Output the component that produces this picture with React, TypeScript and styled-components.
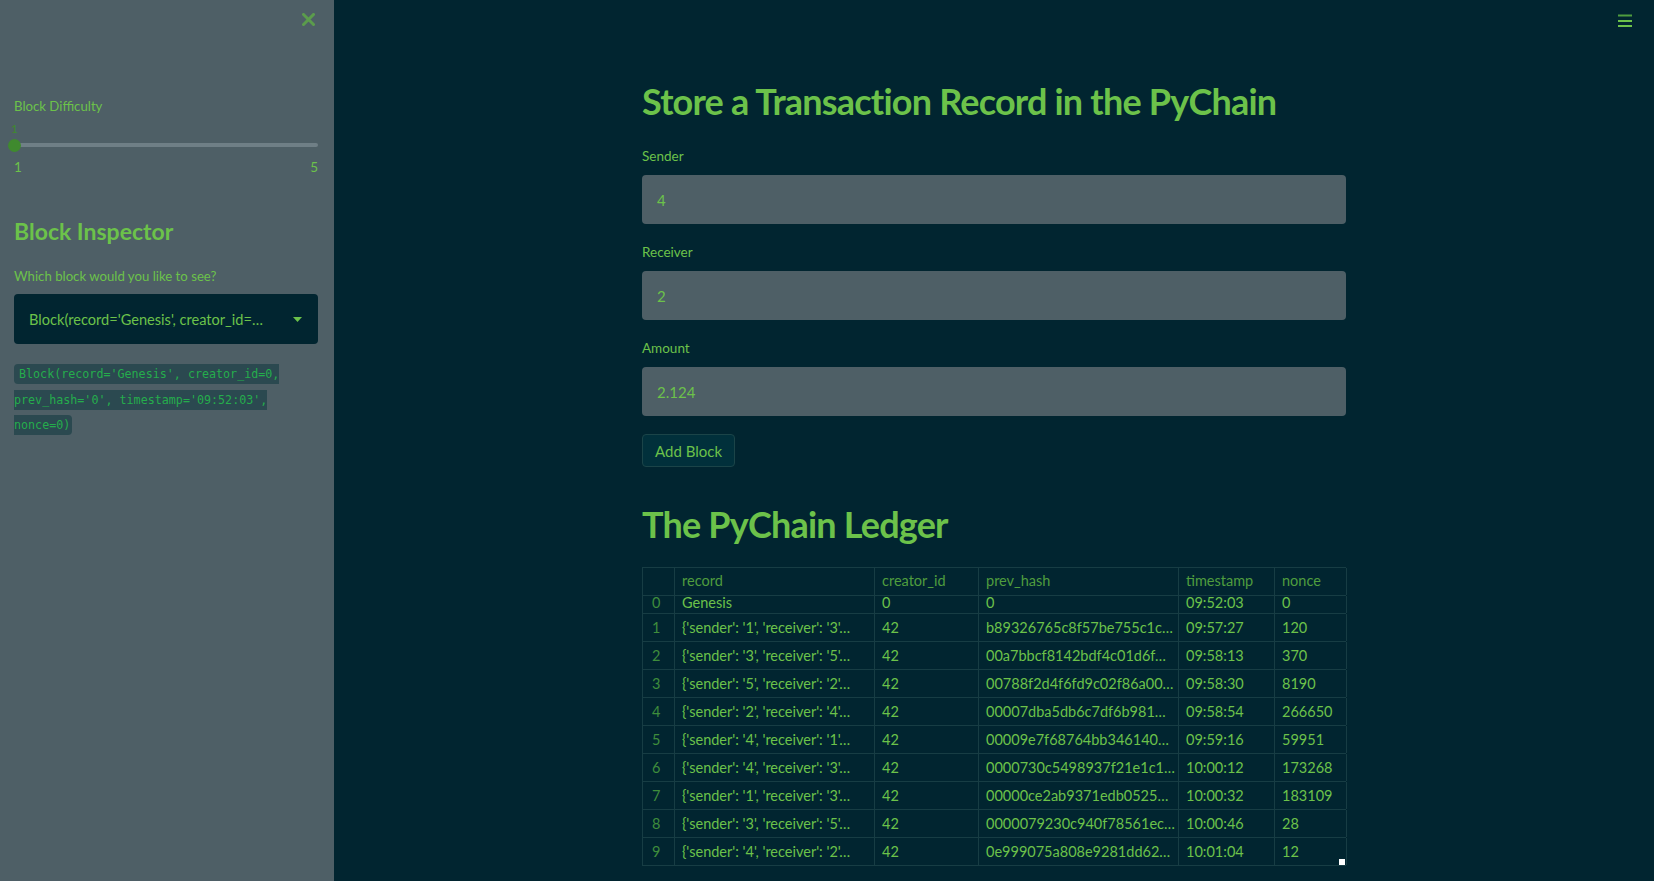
import React from "react";
import styled, { createGlobalStyle } from "styled-components";

const GREEN = "#6cc24a";
const BG = "#012530";
const SIDE = "#4e5f66";

const Global = createGlobalStyle`
  html, body { margin: 0; padding: 0; }
  body {
    background: ${BG};
    font-family: Lato, "Noto Sans", sans-serif;
    color: ${GREEN};
    width: 1654px;
    height: 881px;
    overflow: hidden;
  }
`;

const Shell = styled.div`
  display: flex;
  width: 1654px;
  height: 881px;
`;

const Sidebar = styled.aside`
  width: 334px;
  flex: 0 0 334px;
  background: ${SIDE};
  box-sizing: border-box;
  padding: 13px 16px 0 14px;
  display: flex;
  flex-direction: column;
`;

const CloseRow = styled.div`
  display: flex;
  justify-content: flex-end;
  padding-right: 3px;
  height: 13px;
`;

const Label = styled.div`
  font-size: 13.5px;
  line-height: 20px;
  color: ${GREEN};
`;

const SideLabel = styled(Label)<{ $mt: number }>`
  margin-top: ${(p) => p.$mt}px;
  font-size: 13.2px;
`;

const SliderBox = styled.div`
  position: relative;
  height: 66px;
  margin-top: 6px;
`;

const SliderValue = styled.div`
  position: absolute;
  left: -3px;
  top: 0;
  font-size: 12px;
  line-height: 14px;
  color: #3f8a2e;
`;

const Track = styled.div`
  position: absolute;
  left: 0;
  right: 0;
  top: 21px;
  height: 4px;
  border-radius: 2px;
  background: #6f7f86;
`;

const Thumb = styled.div`
  position: absolute;
  left: -6px;
  top: 16.5px;
  width: 13px;
  height: 13px;
  border-radius: 50%;
  background: #3f8a2e;
`;

const Ticks = styled.div`
  position: absolute;
  left: 0;
  right: 0;
  top: 36px;
  display: flex;
  justify-content: space-between;
  font-size: 13.5px;
  line-height: 18px;
  color: ${GREEN};
`;

const SideHeading = styled.h2`
  margin: 27px 0 0 0;
  font-size: 23px;
  line-height: 32px;
  font-weight: 700;
  color: ${GREEN};
`;

const Select = styled.div`
  margin-top: 8px;
  height: 50px;
  border-radius: 4px;
  background: ${BG};
  display: flex;
  align-items: center;
  padding: 0 16px 0 15px;
  box-sizing: border-box;
  font-size: 14.6px;
  gap: 12px;
`;

const SelectText = styled.span`
  flex: 1;
  white-space: nowrap;
  overflow: hidden;
`;

const CodeWrap = styled.div`
  margin-top: 18px;
  font-family: "DejaVu Sans Mono", "Liberation Mono", monospace;
  font-size: 11.7px;
  line-height: 25.5px;
`;

const Code = styled.code`
  font-family: "DejaVu Sans Mono", "Liberation Mono", monospace;
  font-size: 11.7px;
  line-height: 25.5px;
  color: #25ad4c;
  background: #2b4950;
  padding: 3px 2px 3px 5px;
  border-radius: 4px;
`;

const Main = styled.main`
  flex: 1;
  position: relative;
  display: flex;
  justify-content: center;
`;

const Burger = styled.div`
  position: absolute;
  top: 12px;
  right: 22px;
`;

const Column = styled.div`
  width: 704px;
  padding-top: 74px;
  display: flex;
  flex-direction: column;
`;

const H1 = styled.h1<{ $mt?: number }>`
  margin: ${(p) => p.$mt ?? 0}px 0 0 0;
  font-size: 36px;
  letter-spacing: -0.8px;
  line-height: 54px;
  font-weight: 700;
  color: ${GREEN};
  white-space: nowrap;
`;

const Field = styled.div`
  margin-top: 18px;
  display: flex;
  flex-direction: column;
  gap: 9px;
`;

const Input = styled.div`
  height: 49px;
  border-radius: 4px;
  background: ${SIDE};
  display: flex;
  align-items: center;
  padding-left: 15px;
  font-size: 15px;
  color: ${GREEN};
`;

const Button = styled.button`
  align-self: flex-start;
  margin-top: 18px;
  height: 33px;
  padding: 0 12px;
  border-radius: 4px;
  border: 1px solid #1b4448;
  background: #01303b;
  color: ${GREEN};
  font-family: Lato, "Noto Sans", sans-serif;
  font-size: 15px;
`;

const Table = styled.div`
  position: relative;
  margin-top: 16px;
  border: 1px solid #173d44;
  border-right: none;
  border-bottom: none;
  width: 704px;
  box-sizing: border-box;
`;

const Row = styled.div<{ $h: number }>`
  display: grid;
  grid-template-columns: 32px 200px 104px 200px 96px 72px;
  height: ${(p) => p.$h}px;
  border-bottom: 1px solid #173d44;
  box-sizing: border-box;
`;

const Cell = styled.div<{ $kind: "head" | "index" | "data"; $lh: number }>`
  border-right: 1px solid #173d44;
  padding-left: ${(p) => (p.$kind === "index" ? 9 : 7)}px;
  font-size: 14.5px;
  line-height: ${(p) => p.$lh}px;
  white-space: nowrap;
  overflow: hidden;
  color: ${(p) =>
    p.$kind === "head" ? "#4f9d3e" : p.$kind === "index" ? "#3f8d3c" : GREEN};
`;

const Handle = styled.div`
  position: absolute;
  right: 1px;
  bottom: 1px;
  width: 6px;
  height: 6px;
  background: #ffffff;
`;

const rows: string[][] = [
  ["0", "Genesis", "0", "0", "09:52:03", "0"],
  ["1", "{'sender': '1', 'receiver': '3'…", "42", "b89326765c8f57be755c1c…", "09:57:27", "120"],
  ["2", "{'sender': '3', 'receiver': '5'…", "42", "00a7bbcf8142bdf4c01d6f…", "09:58:13", "370"],
  ["3", "{'sender': '5', 'receiver': '2'…", "42", "00788f2d4f6fd9c02f86a00…", "09:58:30", "8190"],
  ["4", "{'sender': '2', 'receiver': '4'…", "42", "00007dba5db6c7df6b981…", "09:58:54", "266650"],
  ["5", "{'sender': '4', 'receiver': '1'…", "42", "00009e7f68764bb346140…", "09:59:16", "59951"],
  ["6", "{'sender': '4', 'receiver': '3'…", "42", "0000730c5498937f21e1c1…", "10:00:12", "173268"],
  ["7", "{'sender': '1', 'receiver': '3'…", "42", "00000ce2ab9371edb0525…", "10:00:32", "183109"],
  ["8", "{'sender': '3', 'receiver': '5'…", "42", "0000079230c940f78561ec…", "10:00:46", "28"],
  ["9", "{'sender': '4', 'receiver': '2'…", "42", "0e999075a808e9281dd62…", "10:01:04", "12"],
];

const headers = ["", "record", "creator_id", "prev_hash", "timestamp", "nonce"];

const CloseIcon = () => (
  <svg width="13" height="13" viewBox="0 0 13 13">
    <path d="M1.5 1.5 L11.5 11.5 M11.5 1.5 L1.5 11.5" stroke="#5b9c4c" strokeWidth="3" strokeLinecap="square" />
  </svg>
);

const BurgerIcon = () => (
  <svg width="14" height="14" viewBox="0 0 14 14">
    <rect x="0" y="0.5" width="14" height="2" fill="#4f9d3e" />
    <rect x="0" y="6" width="14" height="2" fill={GREEN} />
    <rect x="0" y="11" width="14" height="2" fill={GREEN} />
  </svg>
);

const Caret = () => (
  <svg width="9" height="5" viewBox="0 0 9 5">
    <path d="M0 0 L9 0 L4.5 5 Z" fill={GREEN} />
  </svg>
);

export default function App() {
  return (
    <>
      <Global />
      <Shell>
        <Sidebar>
          <CloseRow>
            <CloseIcon />
          </CloseRow>
          <SideLabel $mt={70}>Block Difficulty</SideLabel>
          <SliderBox>
            <SliderValue>1</SliderValue>
            <Track />
            <Thumb />
            <Ticks>
              <span>1</span>
              <span>5</span>
            </Ticks>
          </SliderBox>
          <SideHeading>Block Inspector</SideHeading>
          <SideLabel $mt={19}>Which block would you like to see?</SideLabel>
          <Select>
            <SelectText>Block(record='Genesis', creator_id=…</SelectText>
            <Caret />
          </Select>
          <CodeWrap>
            <Code>
              Block(record='Genesis', creator_id=0, prev_hash='0', timestamp='09:52:03', nonce=0)
            </Code>
          </CodeWrap>
        </Sidebar>
        <Main>
          <Burger>
            <BurgerIcon />
          </Burger>
          <Column>
            <H1>Store a Transaction Record in the PyChain</H1>
            <Field>
              <Label>Sender</Label>
              <Input>4</Input>
            </Field>
            <Field>
              <Label>Receiver</Label>
              <Input>2</Input>
            </Field>
            <Field>
              <Label>Amount</Label>
              <Input>2.124</Input>
            </Field>
            <Button>Add Block</Button>
            <H1 $mt={30}>The PyChain Ledger</H1>
            <Table>
              <Row $h={28}>
                {headers.map((h, i) => (
                  <Cell key={i} $kind="head" $lh={26}>
                    {h}
                  </Cell>
                ))}
              </Row>
              {rows.map((r, ri) => (
                <Row key={ri} $h={ri === 0 ? 18 : 28}>
                  {r.map((c, ci) => (
                    <Cell key={ci} $kind={ci === 0 ? "index" : "data"} $lh={ri === 0 ? 13 : 27}>
                      {c}
                    </Cell>
                  ))}
                </Row>
              ))}
              <Handle />
            </Table>
          </Column>
        </Main>
      </Shell>
    </>
  );
}
